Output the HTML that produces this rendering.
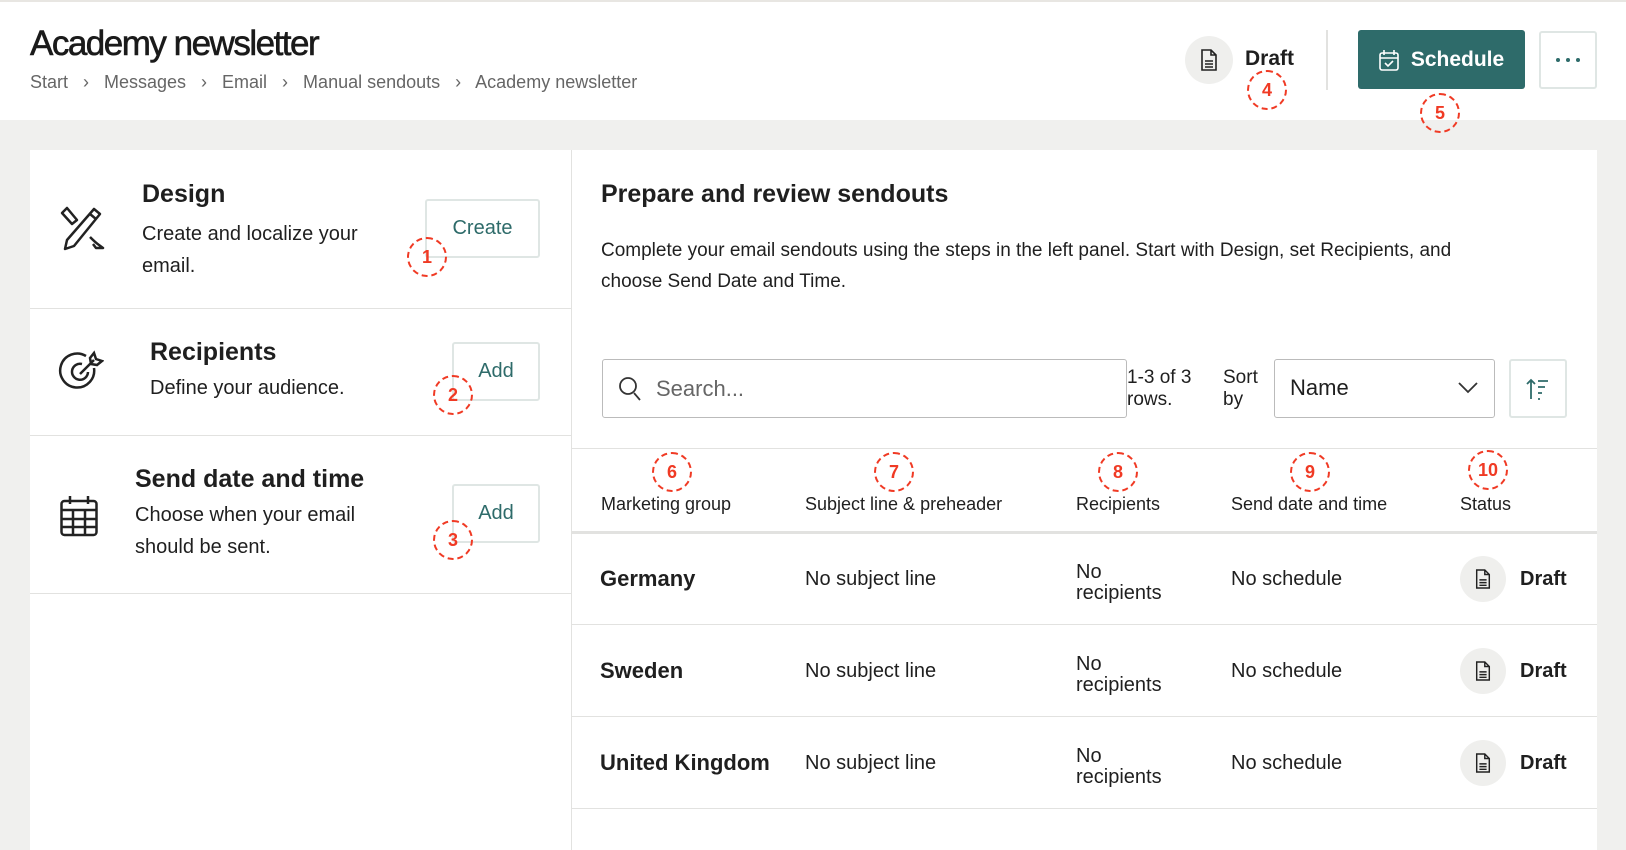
<!DOCTYPE html>
<html><head><meta charset="utf-8"><style>
*{box-sizing:border-box;margin:0;padding:0}
body{width:1626px;height:845px;overflow:hidden;background:#f0f0ee;font-family:"Liberation Sans",sans-serif;color:#1f1f1f;position:relative}
.a{position:absolute;white-space:nowrap}
.btn{position:absolute;border:2px solid #dfe6e4;border-radius:3px;background:#fff;color:#2e6b6a;font-size:20px;display:flex;align-items:center;justify-content:center}
.ann{position:absolute;width:40px;height:40px;border:2px dashed #f03a24;border-radius:50%;color:#f03a24;font-weight:bold;font-size:18px;display:flex;align-items:center;justify-content:center}
.hl{position:absolute;height:1px;background:#e2e2e0}
.col{font-size:18px}
.row{font-size:20px}
.dc{position:absolute;width:46px;height:46px;border-radius:50%;background:#efefed;display:flex;align-items:center;justify-content:center}
.dot{width:4px;height:4px;border-radius:50%;background:#2e6b6a;margin:0 3px}
</style></head><body>
<div class="a" style="left:0;top:0;width:1626px;height:120px;background:#fff;border-top:2px solid #e8e6e2"></div>
<div class="a" style="left:30px;top:24px;font-size:35px;letter-spacing:-1.5px;color:#1a1a1a;-webkit-text-stroke:0.6px #1a1a1a">Academy newsletter</div>
<div class="a" style="left:30px;top:72px;font-size:18px;color:#666">Start &nbsp;&nbsp;›&nbsp;&nbsp; Messages &nbsp;&nbsp;›&nbsp;&nbsp; Email &nbsp;&nbsp;›&nbsp;&nbsp; Manual sendouts &nbsp;&nbsp;›&nbsp;&nbsp; Academy newsletter</div>
<div class="dc" style="left:1185px;top:36px;width:48px;height:48px"><svg width="20" height="22" viewBox="0 0 20 22" fill="none" stroke="#222" stroke-width="1.6"><path d="M3 1h9l5 5v15H3z M12 1v5h5 M6 12h8 M6 15h8 M6 18h8"/></svg></div>
<div class="a" style="left:1245px;top:47px;font-size:21px;font-weight:bold">Draft</div>
<div class="a" style="left:1326px;top:30px;width:2px;height:60px;background:#e2e2e0"></div>
<div class="a" style="left:1358px;top:30px;width:167px;height:59px;background:#2e6b6a;border-radius:3px;color:#fff;font-size:21px;font-weight:bold;display:flex;align-items:center;justify-content:center;gap:12px"><svg width="20" height="22" viewBox="0 0 20 22" fill="none" stroke="#fff" stroke-width="1.6"><rect x="1" y="4" width="18" height="17" rx="2"/><path d="M5 1v5M15 1v5M1 9h18M6 14l3 3 5-5"/></svg>Schedule</div>
<div class="btn" style="left:1539px;top:31px;width:58px;height:58px"><span class="dot"></span><span class="dot"></span><span class="dot"></span></div>
<div class="a" style="left:30px;top:150px;width:1567px;height:700px;background:#fff"></div>
<div class="a" style="left:571px;top:150px;width:1px;height:700px;background:#e2e2e0"></div>
<div class="hl" style="left:30px;top:308px;width:541px"></div>
<div class="hl" style="left:30px;top:435px;width:541px"></div>
<div class="hl" style="left:30px;top:593px;width:541px"></div>
<svg class="a" style="left:58px;top:205px" width="48" height="48" viewBox="0 0 48 48" fill="none" stroke="#222" stroke-width="2.5" stroke-linejoin="round"><path d="M4 8l5-5 10 12-5 4z M36 4l6 5-26 32-9 3 2-9z M32 9l6 5 M32 32c3 3 6 6 9 8l4 3h-7l-3-4"/></svg>
<div class="a" style="left:142px;top:180px;font-size:25px;font-weight:bold">Design</div>
<div class="a" style="left:142px;top:218px;font-size:20px;line-height:32px">Create and localize your<br>email.</div>
<div class="btn" style="left:425px;top:199px;width:115px;height:59px">Create</div>
<svg class="a" style="left:58px;top:350px" width="46" height="46" viewBox="0 0 46 46" fill="none" stroke="#222" stroke-width="2.5"><path d="M36 18A17 17 0 1 1 28 6"/><path d="M30 22A8 8 0 1 1 24 14"/><path d="M22 24L36 10M32 8l4-5 2 6 6 2-5 4-6-1z"/></svg>
<div class="a" style="left:150px;top:338px;font-size:25px;font-weight:bold">Recipients</div>
<div class="a" style="left:150px;top:377px;font-size:20px">Define your audience.</div>
<div class="btn" style="left:452px;top:342px;width:88px;height:59px">Add</div>
<svg class="a" style="left:60px;top:495px" width="38" height="42" viewBox="0 0 38 42" fill="none" stroke="#222" stroke-width="2.5"><rect x="1.5" y="6" width="35" height="34" rx="3"/><path d="M10 1v8M28 1v8M1.5 15h35M1.5 24h35M1.5 32h35M13 15v25M25 15v25"/></svg>
<div class="a" style="left:135px;top:465px;font-size:25px;font-weight:bold">Send date and time</div>
<div class="a" style="left:135px;top:499px;font-size:20px;line-height:32px">Choose when your email<br>should be sent.</div>
<div class="btn" style="left:452px;top:484px;width:88px;height:59px">Add</div>
<div class="a" style="left:601px;top:180px;font-size:25px;font-weight:bold">Prepare and review sendouts</div>
<div class="a" style="left:601px;top:235px;font-size:19px;line-height:31px">Complete your email sendouts using the steps in the left panel. Start with Design, set Recipients, and<br>choose Send Date and Time.</div>
<div class="a" style="left:602px;top:359px;width:525px;height:59px;border:1.5px solid #bbb;border-radius:3px"></div>
<svg class="a" style="left:618px;top:376px" width="24" height="26" viewBox="0 0 24 26" fill="none" stroke="#333" stroke-width="1.8"><circle cx="10" cy="10" r="8"/><path d="M16 17l6 7"/></svg>
<div class="a" style="left:656px;top:376px;font-size:22px;color:#666">Search...</div>
<div class="a" style="left:1127px;top:367px;font-size:19px;line-height:22px">1-3 of 3<br>rows.</div>
<div class="a" style="left:1223px;top:367px;font-size:19px;line-height:22px">Sort<br>by</div>
<div class="a" style="left:1274px;top:359px;width:221px;height:59px;border:1.5px solid #bbb;border-radius:3px"></div>
<div class="a" style="left:1290px;top:375px;font-size:22px">Name</div>
<svg class="a" style="left:1458px;top:382px" width="20" height="12" viewBox="0 0 20 12" fill="none" stroke="#333" stroke-width="1.8"><path d="M1 1l9 9 9-9"/></svg>
<div class="btn" style="left:1509px;top:359px;width:58px;height:59px"><svg width="24" height="22" viewBox="0 0 24 22" fill="none" stroke="#2e6b6a" stroke-width="1.8"><path d="M5 21V2M1 6l4-4 4 4M12 3h10M12 9h7M12 15h4M12 21h2"/></svg></div>
<div class="hl" style="left:572px;top:448px;width:1025px"></div>
<div class="a col" style="left:601px;top:494px">Marketing group</div>
<div class="a col" style="left:805px;top:494px">Subject line &amp; preheader</div>
<div class="a col" style="left:1076px;top:494px">Recipients</div>
<div class="a col" style="left:1231px;top:494px">Send date and time</div>
<div class="a col" style="left:1460px;top:494px">Status</div>
<div class="a" style="left:572px;top:531px;width:1025px;height:3px;background:#e2e2e0"></div>
<div class="hl" style="left:572px;top:624px;width:1025px"></div>
<div class="hl" style="left:572px;top:716px;width:1025px"></div>
<div class="hl" style="left:572px;top:808px;width:1025px"></div>

<div class="a" style="left:600px;top:566px;font-size:22px;font-weight:bold">Germany</div>
<div class="a row" style="left:805px;top:568px">No subject line</div>
<div class="a row" style="left:1076px;top:562px;line-height:21px">No<br>recipients</div>
<div class="a row" style="left:1231px;top:568px">No schedule</div>
<div class="dc" style="left:1460px;top:556px"><svg width="18" height="20" viewBox="0 0 20 22" fill="none" stroke="#222" stroke-width="1.6"><path d="M3 1h9l5 5v15H3z M12 1v5h5 M6 12h8 M6 15h8 M6 18h8"/></svg></div>
<div class="a row" style="left:1520px;top:568px;font-weight:bold">Draft</div>

<div class="a" style="left:600px;top:658px;font-size:22px;font-weight:bold">Sweden</div>
<div class="a row" style="left:805px;top:660px">No subject line</div>
<div class="a row" style="left:1076px;top:654px;line-height:21px">No<br>recipients</div>
<div class="a row" style="left:1231px;top:660px">No schedule</div>
<div class="dc" style="left:1460px;top:648px"><svg width="18" height="20" viewBox="0 0 20 22" fill="none" stroke="#222" stroke-width="1.6"><path d="M3 1h9l5 5v15H3z M12 1v5h5 M6 12h8 M6 15h8 M6 18h8"/></svg></div>
<div class="a row" style="left:1520px;top:660px;font-weight:bold">Draft</div>

<div class="a" style="left:600px;top:750px;font-size:22px;font-weight:bold">United Kingdom</div>
<div class="a row" style="left:805px;top:752px">No subject line</div>
<div class="a row" style="left:1076px;top:746px;line-height:21px">No<br>recipients</div>
<div class="a row" style="left:1231px;top:752px">No schedule</div>
<div class="dc" style="left:1460px;top:740px"><svg width="18" height="20" viewBox="0 0 20 22" fill="none" stroke="#222" stroke-width="1.6"><path d="M3 1h9l5 5v15H3z M12 1v5h5 M6 12h8 M6 15h8 M6 18h8"/></svg></div>
<div class="a row" style="left:1520px;top:752px;font-weight:bold">Draft</div>

<div class="ann" style="left:407px;top:237px">1</div>
<div class="ann" style="left:433px;top:375px">2</div>
<div class="ann" style="left:433px;top:520px">3</div>
<div class="ann" style="left:1247px;top:70px">4</div>
<div class="ann" style="left:1420px;top:93px">5</div>
<div class="ann" style="left:652px;top:452px">6</div>
<div class="ann" style="left:874px;top:452px">7</div>
<div class="ann" style="left:1098px;top:452px">8</div>
<div class="ann" style="left:1290px;top:452px">9</div>
<div class="ann" style="left:1468px;top:450px">10</div>
</body></html>
